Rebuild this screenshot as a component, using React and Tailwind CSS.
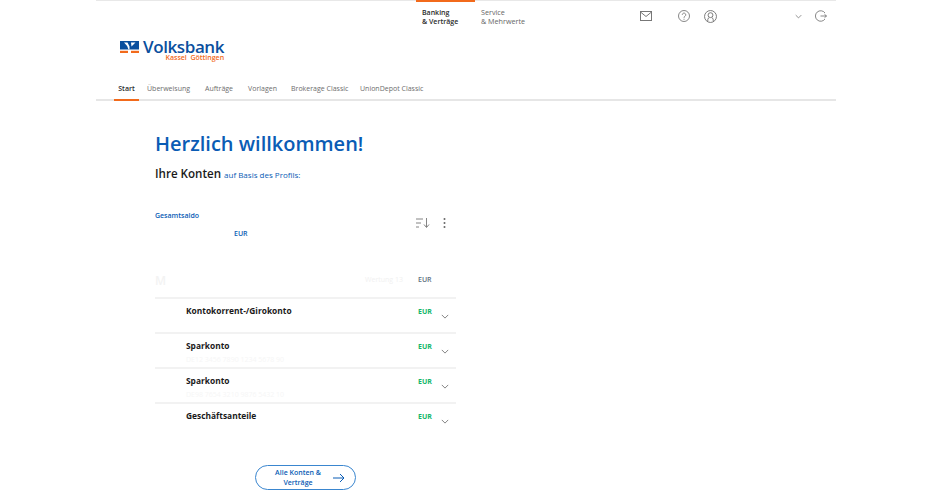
import React from 'react';

const tabs = [
  { label: 'Überweisung', w: 'w-[58px]' },
  { label: 'Aufträge', w: 'w-[43px]' },
  { label: 'Vorlagen', w: 'w-[43px]' },
  { label: 'Brokerage Classic', w: 'w-[69px]' },
  { label: 'UnionDepot Classic', w: 'w-[80px]' },
];

const accounts = [
  { name: 'Kontokorrent-/Girokonto', sub: '' },
  { name: 'Sparkonto', sub: 'DE12 3456 7890 1234 5678 90' },
  { name: 'Sparkonto', sub: 'DE98 7654 3210 9876 5432 10' },
  { name: 'Geschäftsanteile', sub: '' },
];

const Chevron = ({ className }) => (
  <svg className={className} viewBox="0 0 10 6" fill="none" stroke="#666" strokeWidth="1">
    <path d="M1 1l4 4 4-4" />
  </svg>
);

const Logo = () => (
  <div className="flex items-start">
    <svg className="w-[19px] h-[12px] mt-[1px]" viewBox="0 0 19 12">
      <rect x="0" y="0" width="19" height="8.5" fill="#0a4f9e" />
      <path d="M4 1.500h3.500L9.500 5.500V8.500H8.500Q8 5 4 1.500zM11 1.500h4.500L11.500 5.500z" fill="#fff" />
      <rect x="0" y="9.800" width="8" height="2.200" fill="#f26a1b" />
      <rect x="11" y="9.800" width="8" height="2.200" fill="#f26a1b" />
    </svg>
    <div className="ml-[4px] flex flex-col items-end">
      <span className="text-[17px] leading-[14px] font-semibold tracking-[-0.4px] text-[#0a4f9e]">Volksbank</span>
      <span className="text-[7px] leading-[8px] font-semibold text-[#f26a1b] whitespace-pre">Kassel  Göttingen</span>
    </div>
  </div>
);

export default function App() {
  return (
    <div className="w-[930px] h-[500px] overflow-hidden bg-white font-['Open_Sans',sans-serif]">
      <div className="w-[740px] ml-[96px]">
        {/* Top bar */}
        <div className="h-[32px] border-t border-[#e8e8e8] flex">
          <div className="ml-[320px] w-[59px] -mt-[1px] h-[33px] border-t-2 border-[#f26a1b] pl-[6px] pt-[6px] text-[7px] leading-[9px] font-semibold text-[#2b2b2b]">
            Banking<br />&amp; Verträge
          </div>
          <div className="ml-[6px] w-[100px] pt-[7px] text-[7.2px] leading-[9px] text-[#666]">
            Service<br />&amp; Mehrwerte
          </div>
          <div className="flex items-center -mt-[1px]">
            <svg className="ml-[59px] w-[12px] h-[10px]" viewBox="0 0 12 10" fill="none" stroke="#777" strokeWidth="1">
              <rect x="0.5" y="0.5" width="11" height="9" />
              <path d="M0.5 1l5.500 4.500L11.500 1" />
            </svg>
            <svg className="ml-[26px] w-[12px] h-[12px]" viewBox="0 0 24 24" fill="none" stroke="#6a6a6a" strokeWidth="1.6">
              <circle cx="12" cy="12" r="11" />
              <path d="M8.500 9.500a3.500 3.500 0 1 1 5.500 3c-1.300.9-2 1.500-2 3M12 17.500v2" />
            </svg>
            <svg className="ml-[14px] w-[13px] h-[13px]" viewBox="0 0 24 24" fill="none" stroke="#6a6a6a" strokeWidth="1.6">
              <circle cx="12" cy="12" r="11" />
              <circle cx="12" cy="9.500" r="4.500" />
              <path d="M7 21v-3.500q0-2.500 2.500-3M17 21v-3.500q0-2.500-2.500-3" />
            </svg>
            <Chevron className="ml-[78px] w-[7px] h-[5px]" />
            <svg className="ml-[13px] w-[12px] h-[12px]" viewBox="0 0 24 24" fill="none" stroke="#6a6a6a" strokeWidth="1.6">
              <path d="M20 6A10.500 10.500 0 1 0 20 18" />
              <path d="M11 12h12M19 8.500l4 3.500-4 3.500" />
            </svg>
          </div>
        </div>

        {/* Logo */}
        <div className="pl-[24px] pt-[8px] h-[41px]">
          <Logo />
        </div>

        {/* Tabs */}
        <div className="h-[28px] border-b-2 border-[#e6e6e6] flex text-[7px]">
          <div className="ml-[18px] w-[25px] h-[28px] border-b-2 border-[#f26a1b] flex items-center justify-center pt-[6px] font-semibold text-[#2b2b2b]">
            Start
          </div>
          <div className="w-[8px]" />
          {tabs.map((t) => (
            <div key={t.label} className={`${t.w} h-[26px] flex items-center pt-[6px] text-[#6d6d6d] whitespace-nowrap`}>
              {t.label}
            </div>
          ))}
        </div>

        {/* Content */}
        <div className="ml-[59px] w-[301px]">
          <h1 className="mt-[27px] text-[20px] leading-[32px] font-semibold text-[#0a5cb5] whitespace-nowrap">
            Herzlich willkommen!
          </h1>
          <div className="mt-[5px] h-[22px] flex items-baseline">
            <span className="text-[11.6px] font-semibold text-[#1a1a1a]">Ihre Konten</span>
            <span className="ml-[3px] text-[8px] text-[#0a5cb5]">auf Basis des Profils:</span>
          </div>

          <div className="mt-[24px] flex justify-between">
            <div>
              <div className="text-[7px] leading-[10px] font-semibold text-[#0a5cb5]">Gesamtsaldo</div>
              <div className="mt-[8px] pl-[79px] text-[7px] leading-[10px] font-semibold text-[#0a5cb5]">EUR</div>
            </div>
            <div className="flex items-center h-[14px] mt-[5px] pr-[10px]">
              <svg className="w-[14px] h-[10px]" viewBox="0 0 14 10" fill="none" stroke="#777" strokeWidth="0.9">
                <path d="M0 1h7M0 5h5M0 9h3M10.500 0v9M8 6.500l2.500 3 2.500-3" />
              </svg>
              <svg className="ml-[13px] w-[3px] h-[10px]" viewBox="0 0 3 10" fill="#666">
                <circle cx="1.500" cy="1" r="1" />
                <circle cx="1.500" cy="5" r="1" />
                <circle cx="1.500" cy="9" r="1" />
              </svg>
            </div>
          </div>

          {/* Faded group row */}
          <div className="mt-[35px] h-[23px] flex items-start">
            <span className="text-[12px] leading-[14px] font-semibold text-[#f3f3f3] w-[210px]">M</span>
            <span className="text-[7px] leading-[12px] text-[#f1f1f1] w-[53px] whitespace-nowrap">Wertung 13</span>
            <span className="text-[7px] leading-[12px] font-semibold text-[#5e7080]">EUR</span>
          </div>

          {accounts.map((a) => (
            <div key={a.name + a.sub} className="h-[35px] border-t-2 border-[#f2f2f2] flex">
              <div className="ml-[31px] w-[232px] pt-[6px]">
                <div className="text-[8.4px] leading-[12px] font-bold text-[#1a1a1a]">{a.name}</div>
                <div className="mt-[3px] text-[7px] leading-[9px] text-[#f6f6f6] whitespace-nowrap">{a.sub}</div>
              </div>
              <div className="pt-[8px] w-[23px] text-[7px] leading-[10px] font-bold text-[#12b76a]">EUR</div>
              <div className="pt-[15px]">
                <Chevron className="w-[8px] h-[5px]" />
              </div>
            </div>
          ))}

          <div className="mt-[28px] ml-[100px] w-[101px] h-[25px] rounded-full border border-[#3a86cf] flex items-center">
            <div className="w-[70px] ml-[7px] text-center text-[7px] leading-[10px] font-semibold text-[#0a5cb5]">
              Alle Konten &amp; Verträge
            </div>
            <svg className="ml-[0px] w-[12px] h-[10px]" viewBox="0 0 12 10" fill="none" stroke="#0a5cb5" strokeWidth="1">
              <path d="M0 5h11M7 1l4 4-4 4" />
            </svg>
          </div>
        </div>
      </div>
    </div>
  );
}
